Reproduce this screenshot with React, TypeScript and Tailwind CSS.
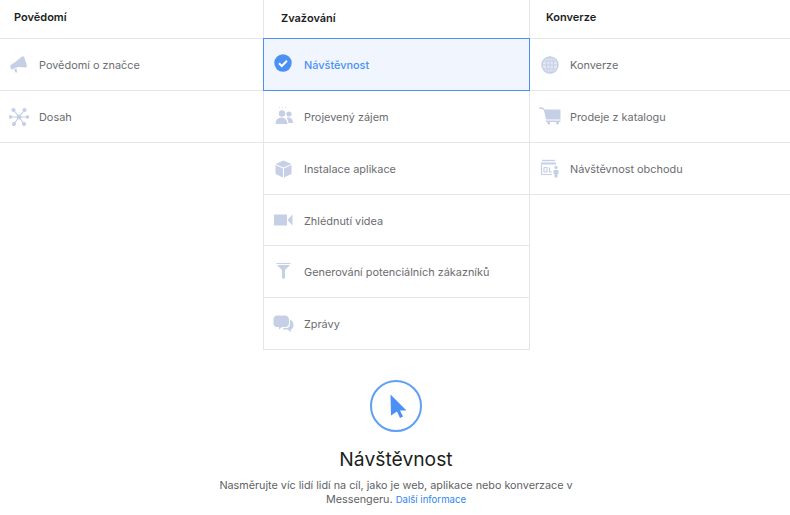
import React from "react";

const C = "#c5cfe6";

const Megaphone = () => (
  <svg width="18" height="18" viewBox="0 0 18 18" fill={C}>
    <path d="M0.5 9 L6 5.5 L12 0.5 L14 0.5 L17 10 L16 11.5 L8 11 L2 13.5 Q0 13 0.5 9 Z" />
    <path d="M4 13.5 L6.5 12.5 L7.2 16.5 L5.5 16.5 Z" />
  </svg>
);
const Hub = () => (
  <svg width="20" height="20" viewBox="0 0 20 20" fill={C} stroke={C}>
    <path d="M10 10 L4.5 3 M10 10 L15.5 3 M10 10 L5 17 M10 10 L15 17 M10 10 L1 10 M10 10 L19 10" strokeWidth="1.2" />
    <circle cx="10" cy="10" r="2" />
    <circle cx="4.5" cy="3" r="1.6" />
    <circle cx="15.5" cy="3" r="1.6" />
    <circle cx="5" cy="17" r="1.6" />
    <circle cx="15" cy="17" r="1.6" />
    <circle cx="1.5" cy="10" r="1.4" />
    <circle cx="18.5" cy="10" r="1.4" />
  </svg>
);
const Check = () => (
  <svg width="18" height="18" viewBox="0 0 18 18" className="-mt-[3px]">
    <circle cx="9" cy="9" r="8.7" fill="#4a90f5" />
    <path d="M5 9.3 L7.8 12 L13 6.8" fill="none" stroke="#fff" strokeWidth="2" />
  </svg>
);
const People = () => (
  <svg width="18" height="20" viewBox="0 0 18 20" fill={C} className="-mt-[2px]">
    <path d="M4 1h1v1H4zM7 1h1v1H7zM10 1h1v1h-1z" opacity=".7" />
    <circle cx="7" cy="7.5" r="3.2" />
    <circle cx="14" cy="8" r="2.6" />
    <path d="M0.5 18 Q0.5 11.5 6.5 11.5 Q12 11.5 12.5 18 Z" />
    <path d="M12.5 11.5 Q18 11 18 17 L13.5 17 Q13.4 13.6 11.5 12 Z" />
  </svg>
);
const Box = () => (
  <svg width="17" height="18" viewBox="0 0 17 18" fill={C}>
    <path d="M8.5 0.5 L16.5 4 L8.5 7.5 L0.5 4 Z" />
    <path d="M0.5 5 L8 8.4 L8 17.5 L0.5 14 Z" />
    <path d="M16.5 5 L9 8.4 L9 17.5 L16.5 14 Z" />
  </svg>
);
const Video = () => (
  <svg width="19" height="12" viewBox="0 0 19 12" fill={C}>
    <path d="M0 0.5 H13 V11.5 H0 Z" />
    <path d="M18.5 0.5 V11.5 L13.5 6 Z" />
  </svg>
);
const Funnel = () => (
  <svg width="15" height="16" viewBox="0 0 15 16" fill={C} className="-mt-[2px]">
    <path d="M0.5 0 H14.5 V1 H0.5 Z" />
    <path d="M1 2 H14 L9 7 V15.5 H6 V7 Z" />
  </svg>
);
const Chat = () => (
  <svg width="21" height="18" viewBox="0 0 21 18" fill={C}>
    <path d="M4 0.5 H12 Q16 0.5 16 5 V8 Q16 12 12 12 H9 L6 14.5 L6 12 H4 Q0.5 12 0.5 8 V5 Q0.5 0.5 4 0.5 Z" />
    <path d="M17 4.5 Q20.5 6 20.5 10 Q20.5 13.5 18 14.5 V17 L14.5 14.5 H10 L10.5 13 H13 Q17 13 17 8.5 Z" />
  </svg>
);
const Globe = () => (
  <svg width="18" height="18" viewBox="0 0 18 18" fill="#e3e8f3" stroke={C} strokeWidth="1">
    <circle cx="9" cy="9" r="8" strokeWidth="1.4" />
    <ellipse cx="9" cy="9" rx="3.6" ry="8" fill="none" />
    <path d="M9 1 V17 M1 9 H17 M2 5 H16 M2 13 H16" fill="none" />
  </svg>
);
const Cart = () => (
  <svg width="22" height="19" viewBox="0 0 22 19" fill={C}>
    <path d="M0 0.5 H4 L5.5 2.5 H21.5 V12.5 H7 L5 3.5 L3.5 2 H0.5 Z" />
    <path d="M6.5 13.5 H21.5 V15 H7 Z" />
    <path d="M8 15 H11 V17.5 H9 Z M17 15 H20 L19.5 17.5 H17.5 Z" />
  </svg>
);
const Store = () => (
  <svg width="20" height="19" viewBox="0 0 20 19" fill="none" stroke={C}>
    <path d="M2 1.5 H15" strokeWidth="1.4" />
    <path d="M1 3.5 H16 V5.5 H1 Z" fill={C} stroke="none" />
    <path d="M1.5 5.5 V15.5 H12 M4 8.5 V13 H7 V8.5 H4 M9.5 8.5 V13 H12" strokeWidth="1.2" />
    <circle cx="16" cy="8.5" r="1.7" fill={C} stroke="none" />
    <path d="M13.5 11 H18.5 V15 H17.5 V18.5 H14.5 V15 H13.5 Z" fill={C} stroke="none" />
  </svg>
);

type RowProps = { icon: React.ReactNode; label: string; textLeft: string; iconBox: string; h: string; last?: boolean };

function Row({ icon, label, textLeft, iconBox, h, last }: RowProps) {
  return (
    <div className={"flex items-center text-[#6b6d72] " + h + (last ? "" : " border-b border-[#e4e6ea]")}>
      <div className={"flex shrink-0 items-center justify-center " + iconBox}>{icon}</div>
      <span className={textLeft + " pt-[2px]"}>{label}</span>
    </div>
  );
}

export default function App() {
  return (
    <div className="flex h-[515px] w-[790px] flex-col overflow-hidden bg-white font-['Inter','Liberation_Sans',sans-serif] text-[10.9px] antialiased">
      <div className="flex h-[350px] items-start">
        <div className="w-[263px]">
          <div className="flex h-[39px] items-center border-b border-[#e4e6ea] pb-[3px] pl-[14px] text-[11px] font-semibold text-[#1d1e21]">Povědomí</div>
          <Row h="h-[52px]" iconBox="w-[38px]" textLeft="ml-px" icon={<Megaphone />} label="Povědomí o značce" />
          <Row h="h-[52px]" iconBox="w-[38px]" textLeft="ml-px" icon={<Hub />} label="Dosah" />
        </div>
        <div className="h-[350px] w-[267px] border-x border-b border-[#e4e6ea]">
          <div className="flex h-[39px] items-center pb-[3px] pl-[17px] text-[11px] font-semibold text-[#1d1e21]">Zvažování</div>
          <div className="-mx-px -mt-px flex h-[53px] items-center border border-[#4a90f5] bg-[#f0f5fe] font-medium text-[#4a90f5]">
            <div className="flex w-[38px] shrink-0 items-center justify-center"><Check /></div>
            <span className="ml-[2px] pt-[2px]">Návštěvnost</span>
          </div>
          <Row h="h-[52px]" iconBox="w-[39px]" textLeft="ml-[1px]" icon={<People />} label="Projevený zájem" />
          <Row h="h-[52px]" iconBox="w-[39px]" textLeft="ml-[1px]" icon={<Box />} label="Instalace aplikace" />
          <Row h="h-[51px]" iconBox="w-[39px]" textLeft="ml-[1px]" icon={<Video />} label="Zhlédnutí videa" />
          <Row h="h-[52px]" iconBox="w-[39px]" textLeft="ml-[1px]" icon={<Funnel />} label="Generování potenciálních zákazníků" />
          <Row last h="h-[51px]" iconBox="w-[39px]" textLeft="ml-[1px]" icon={<Chat />} label="Zprávy" />
        </div>
        <div className="flex-1">
          <div className="flex h-[39px] items-center border-b border-[#e4e6ea] pb-[3px] pl-[16px] text-[11px] font-semibold text-[#1d1e21]">Konverze</div>
          <Row h="h-[52px]" iconBox="w-[40px]" icon={<Globe />} textLeft="" label="Konverze" />
          <Row h="h-[52px]" iconBox="w-[40px]" icon={<Cart />} textLeft="" label="Prodeje z katalogu" />
          <Row h="h-[52px]" iconBox="w-[40px]" icon={<Store />} textLeft="" label="Návštěvnost obchodu" />
        </div>
      </div>
      <div className="flex flex-col items-center pl-[2px] pt-[30px]">
        <div className="flex h-[52px] w-[52px] items-center justify-center rounded-full border-2 border-[#5f9ff5]">
          <svg width="17" height="24" viewBox="0 0 17 24" fill="#4a90f5" className="ml-[4px] -mt-[1px]">
            <path d="M0.5 0.5 L16.5 16.5 L10 16.5 L13 22.5 L10 24 L7 17.5 L1 21.5 Z" />
          </svg>
        </div>
        <h1 className="mt-[13px] text-[19.3px] leading-[28px] font-normal text-[#1d1e21]">Návštěvnost</h1>
        <p className="mt-[6px] w-[370px] text-center text-[10.8px] leading-[14px] text-[#606266]">
          Nasměrujte víc lidí lidí na cíl, jako je web, aplikace nebo konverzace v Messengeru.{" "}
          <span className="text-[9.6px] leading-none text-[#2f86f0]">Další informace</span>
        </p>
      </div>
    </div>
  );
}
